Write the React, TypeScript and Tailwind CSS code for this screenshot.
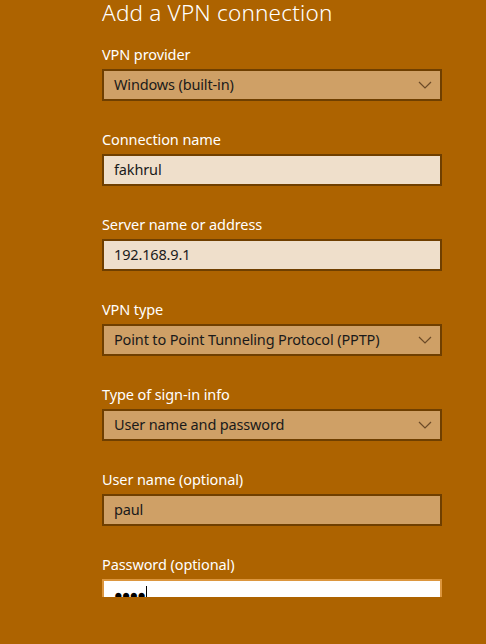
const font = { fontFamily: '"Noto Sans", "Open Sans", sans-serif' };

type Field = {
  label: string;
  value: string;
  kind: "select" | "text" | "filled" | "password";
};

const fields: Field[] = [
  { label: "VPN provider", value: "Windows (built-in)", kind: "select" },
  { label: "Connection name", value: "fakhrul", kind: "text" },
  { label: "Server name or address", value: "192.168.9.1", kind: "text" },
  { label: "VPN type", value: "Point to Point Tunneling Protocol (PPTP)", kind: "select" },
  { label: "Type of sign-in info", value: "User name and password", kind: "select" },
  { label: "User name (optional)", value: "paul", kind: "filled" },
  { label: "Password (optional)", value: "", kind: "password" },
];

function Chevron() {
  return (
    <svg width="14" height="8" viewBox="0 0 14 8" className="shrink-0">
      <path d="M1 1l6 6 6-6" fill="none" stroke="#6b4a28" strokeWidth="1.2" />
    </svg>
  );
}

function Input({ field }: { field: Field }) {
  const box =
    field.kind === "select" || field.kind === "filled"
      ? "bg-[#cfa066] border-[#6f3f00]"
      : field.kind === "text"
        ? "bg-[#efdfcb] border-[#6f3f00]"
        : "bg-white border-[#dc963e]";

  return (
    <div
      className={`mt-[5px] flex h-[32px] w-[340px] items-center justify-between border-2 pl-[10px] pr-[8px] text-[14.5px] tracking-[-0.15px] text-[#1a1a1a] ${box}`}
    >
      {field.kind === "password" ? (
        <span className="flex items-center">
          <span className="tracking-[-1px] text-black">●●●●</span>
          <span className="ml-[1px] h-[18px] w-px bg-black" />
        </span>
      ) : (
        <span>{field.value}</span>
      )}
      {field.kind === "select" && <Chevron />}
    </div>
  );
}

export default function App() {
  return (
    <div className="h-[644px] w-[486px] overflow-hidden bg-[#ad6300]" style={font}>
      <div className="h-[597px] overflow-hidden pl-[102px]">
        <h1 className="mt-[-2px] text-[22.5px] font-light leading-[30px] tracking-[0.2px] text-white">
          Add a VPN connection
        </h1>
        <div className="mt-[16px] flex flex-col gap-[28px]">
          {fields.map((f) => (
            <div key={f.label}>
              <div className="text-[14.5px] leading-[20px] tracking-[-0.1px] text-white">{f.label}</div>
              <Input field={f} />
            </div>
          ))}
        </div>
      </div>
    </div>
  );
}
